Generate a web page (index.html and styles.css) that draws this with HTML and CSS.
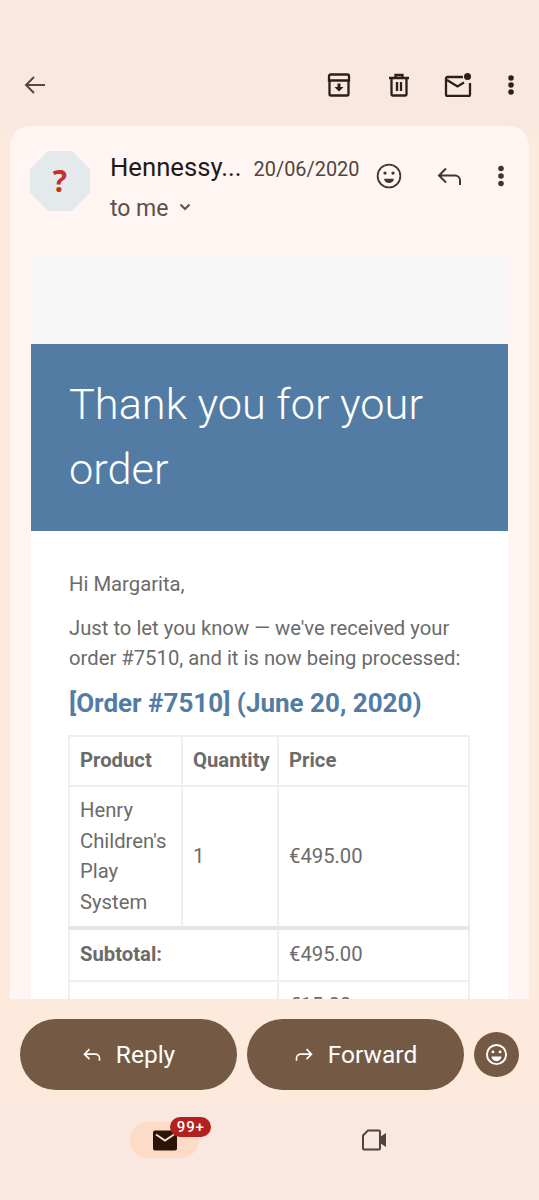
FILE: index.html
```html
<!DOCTYPE html>
<html lang="en">
<head>
    <meta charset="UTF-8">
    <title>Order #7510</title>
    <link rel="stylesheet" href="styles.css">
</head>
<body>
    <div class="top-bar">
        <svg class="ico back" viewBox="0 0 24 24"><path d="M22 12H3M11 4l-8 8 8 8"/></svg>
        <div class="top-actions">
            <svg class="ico" viewBox="0 0 24 24"><path d="M2.500 7.500V21a1.500 1.500 0 0 0 1.500 1.500h16a1.500 1.500 0 0 0 1.500-1.500V7.500M2 7.500V3a1.500 1.500 0 0 1 1.500-1.500h17A1.500 1.500 0 0 1 22 3v4.500z"/><path class="fill" d="M10.500 10.500h3V14H16.500L12 18.500 7.500 14h3z"/></svg>
            <svg class="ico trash" viewBox="0 0 24 24"><path d="M2 5h20M8.500 5V2h7v3M4.500 5v16a1.500 1.500 0 0 0 1.500 1.500h12a1.500 1.500 0 0 0 1.500-1.500V5M10 9v9M14 9v9"/></svg>
            <svg class="ico wide" viewBox="0 0 28 24"><path d="M19 4H3.500A1.500 1.500 0 0 0 2 5.500v16A1.500 1.500 0 0 0 3.500 23h21a1.500 1.500 0 0 0 1.500-1.500V10M3 7l10.500 6.500L20 9.500"/><circle class="fill" cx="23.500" cy="3.500" r="3.500"/></svg>
            <svg class="ico dots" viewBox="0 0 24 24"><circle class="fill" cx="12" cy="5" r="2.800"/><circle class="fill" cx="12" cy="12" r="2.800"/><circle class="fill" cx="12" cy="19" r="2.800"/></svg>
        </div>
    </div>

    <div class="mail-card">
        <div class="mail-head">
            <div class="avatar">?</div>
            <div class="sender">
                <div class="sender-line"><span class="sender-name">Hennessy...</span><span class="sender-date">20/06/2020</span></div>
                <div class="to-me">to me <svg class="chev" viewBox="0 0 12 8"><path d="M1.500 1.500 6 6l4.500-4.500"/></svg></div>
            </div>
            <div class="head-actions">
                <svg class="ico smile" viewBox="0 0 24 24"><circle cx="12" cy="12" r="10.500"/><circle class="fill" cx="8.300" cy="9.300" r="1.500"/><circle class="fill" cx="15.700" cy="9.300" r="1.500"/><path class="fill" d="M7.500 14.500h9a4.500 4 0 0 1-9 0z"/></svg>
                <svg class="ico" viewBox="0 0 26 26"><path d="M10 5.500 3 12.500l7 7M3.500 12.500H19a5 5 0 0 1 5 5V22"/></svg>
                <svg class="ico menu" viewBox="0 0 20 26"><circle class="fill" cx="10" cy="5.500" r="2.800"/><circle class="fill" cx="10" cy="13" r="2.800"/><circle class="fill" cx="10" cy="20.500" r="2.800"/></svg>
            </div>
        </div>

        <div class="mail-sheet">
            <div class="sheet-top"></div>
            <div class="banner">Thank you for your order</div>
            <div class="mail-body">
                <p class="greet">Hi Margarita,</p>
                <p class="intro">Just to let you know — we've received your order #7510, and it is now being processed:</p>
                <h2>[Order #7510] (June 20, 2020)</h2>
                <table class="order">
                    <tr class="row-head"><th class="c1">Product</th><th class="c2">Quantity</th><th>Price</th></tr>
                    <tr class="row-item"><td class="c1">Henry Children's Play System</td><td class="c2">1</td><td>€495.00</td></tr>
                    <tr class="row-sub"><th colspan="2">Subtotal:</th><td>€495.00</td></tr>
                    <tr class="row-cut"><th colspan="2"></th><td>€15.00</td></tr>
                </table>
            </div>
        </div>
    </div>

    <div class="bottom">
        <div class="reply-bar">
            <div class="pill">
                <svg class="ico-sm" viewBox="0 0 24 24"><path d="M9 5 3 11l6 6M3.500 11H16a5 5 0 0 1 5 5v3"/></svg>
                Reply
            </div>
            <div class="pill">
                <svg class="ico-sm" viewBox="0 0 24 24"><path d="M15 5l6 6-6 6M20.500 11H8a5 5 0 0 0-5 5v3"/></svg>
                Forward
            </div>
            <div class="round">
                <svg class="ico-smile" viewBox="0 0 24 24"><circle cx="12" cy="12" r="10"/><circle class="fill" cx="8.300" cy="9.300" r="1.500"/><circle class="fill" cx="15.700" cy="9.300" r="1.500"/><path class="fill" d="M6.800 14h10.400a5.200 5 0 0 1-10.400 0z"/></svg>
            </div>
        </div>
        <div class="nav-bar">
            <div class="nav-item">
                <div class="nav-active">
                    <svg class="nav-mail" viewBox="0 0 24 20"><rect class="mail-back" width="24" height="20" rx="2"/><path class="mail-flap" d="M3 4l9 6 9-6"/></svg>
                    <span class="badge">99+</span>
                </div>
            </div>
            <div class="nav-item">
                <svg class="nav-video" viewBox="0 0 26 22"><path d="M7 1.500h11a1 1 0 0 1 1 1v17a1 1 0 0 1-1 1H3a1 1 0 0 1-1-1V6.500z"/><path class="fill" d="M19 8l6-4v14l-6-4z"/></svg>
            </div>
        </div>
    </div>
</body>
</html>
```
FILE: styles.css
```css
* {
    box-sizing: border-box;
}

html, body {
    margin: 0;
    height: 1200px;
    overflow: hidden;
}

body {
    position: relative;
    font-family: Roboto, "Noto Sans", sans-serif;
    background: linear-gradient(#f9e8df 0, #f9e8df 122px, #feeadd 150px);
    color: #4f4540;
}

svg path, svg circle {
    fill: none;
    stroke: currentColor;
    stroke-width: 2;
}

svg .fill {
    fill: currentColor;
    stroke: none;
}

.top-bar {
    height: 126px;
    padding: 73px 16px 0 23px;
    display: flex;
    justify-content: space-between;
    align-items: flex-start;
}

.top-actions {
    display: flex;
    align-items: center;
    color: #2a1f1a;
}

.top-actions svg path {
    stroke-width: 2.3;
}

.top-actions svg .fill {
    stroke: none;
}

.top-actions .trash {
    margin-left: 36px;
}

.top-actions .wide {
    margin-left: 33px;
}

.top-actions .dots {
    margin-left: 27px;
}

.ico {
    width: 24px;
    height: 24px;
    display: block;
}

.ico.back {
    color: #55483f;
}

.ico.wide {
    width: 28px;
}

.mail-card {
    margin: 0 10px;
    height: 874px;
    background: #fff5f2;
    border-radius: 20px 20px 0 0;
    overflow: hidden;
}

.mail-head {
    height: 130px;
    padding: 25px 16px 0 20px;
    display: flex;
}

.avatar {
    width: 60px;
    height: 60px;
    background: #e4eaec;
    clip-path: polygon(30% 0, 70% 0, 100% 30%, 100% 70%, 70% 100%, 30% 100%, 0 70%, 0 30%);
    color: #c5302d;
    font: bold 30px/60px "Open Sans", sans-serif;
    text-align: center;
}

.sender {
    margin-left: 20px;
    width: 250px;
    flex: none;
}

.sender-line {
    display: flex;
    align-items: baseline;
    gap: 12px;
    height: 34px;
    padding-top: 1px;
}

.sender-name {
    font-size: 25.7px;
    color: #1f1a17;
}

.sender-date {
    font-size: 19.9px;
    color: #4f4540;
}

.to-me {
    margin-top: 10px;
    font-size: 23px;
    color: #5a504a;
}

.chev {
    width: 12px;
    height: 8px;
    margin: 0 0 5px 5px;
}

.head-actions {
    display: flex;
    gap: 34px;
    margin: 12px 0 0 16px;
    color: #3f3630;
}

.head-actions .ico {
    width: 26px;
    height: 26px;
    flex: none;
}

.head-actions .smile circle {
    stroke-width: 1.7;
}

.head-actions .menu {
    width: 20px;
    margin-left: -5px;
}

.mail-sheet {
    margin: 0 21px;
    background: #fff;
}

.sheet-top {
    height: 88px;
    background: #f7f7f7;
}

.banner {
    height: 187px;
    background: #537ca5;
    color: #fff;
    padding: 28px 38px 0;
    font-size: 43.3px;
    font-weight: 300;
    line-height: 65px;
}

.mail-body {
    padding: 38px 36px 0 38px;
    color: #6b6b6b;
    font-size: 20.25px;
}

.mail-body p {
    margin: 0;
    line-height: 30.5px;
}

.mail-body .greet {
    margin-bottom: 13px;
}

.mail-body h2 {
    margin: 13px 0 16px;
    color: #537ca5;
    font-size: 26px;
    font-weight: 700;
    line-height: 32px;
}

.order {
    width: 402px;
    margin-left: -1px;
    border-collapse: collapse;
    font-size: 20.25px;
    table-layout: fixed;
}

.order th, .order td {
    border: 2px solid #efefef;
    padding: 0 10px;
    text-align: left;
    line-height: 30.5px;
    color: #6b6b6b;
}

.order .c1 {
    width: 113px;
}

.order .c2 {
    width: 96px;
}

.row-head th {
    height: 50px;
}

.row-item td {
    height: 142px;
}

.order .row-sub th, .order .row-sub td {
    border-top: 4px solid #e6e6e6;
    height: 53px;
}

.row-cut td, .row-cut th {
    height: 50px;
}

.bottom {
    position: absolute;
    left: 0;
    right: 0;
    top: 999px;
    height: 201px;
    background: linear-gradient(#feeadd 0, #feeadd 102px, #f9e8df 112px);
}

.reply-bar {
    display: flex;
    align-items: center;
    gap: 10px;
    padding: 20px 20px 0;
    height: 91px;
}

.pill {
    width: 217px;
    height: 71px;
    border-radius: 36px;
    background: #745a44;
    color: #fff;
    font-size: 24.5px;
    display: flex;
    align-items: center;
    justify-content: center;
    gap: 14px;
}

.ico-sm {
    width: 20px;
    height: 20px;
}

.round {
    width: 45px;
    height: 45px;
    border-radius: 50%;
    background: #745a44;
    color: #fff;
    display: flex;
    align-items: center;
    justify-content: center;
}

.ico-smile {
    width: 23px;
    height: 23px;
}

.nav-bar {
    display: flex;
    padding: 32px 60px 0;
}

.nav-item {
    flex: 1;
    display: flex;
    justify-content: center;
    height: 36px;
    align-items: center;
}

.nav-active {
    position: relative;
    width: 69px;
    height: 36px;
    border-radius: 18px;
    background: #fddbc7;
    display: flex;
    align-items: center;
    justify-content: center;
}

.nav-mail {
    width: 24px;
    height: 21px;
}

.mail-back {
    fill: #2a1508;
}

.mail-flap {
    stroke: #fbdcc8;
}

.badge {
    position: absolute;
    left: 40px;
    top: -5px;
    height: 20px;
    width: 41px;
    border-radius: 10px;
    background: #b3201e;
    color: #fff;
    font-size: 15px;
    font-weight: 500;
    line-height: 20px;
    text-align: center;
    letter-spacing: 0.8px;
}

.nav-video {
    width: 26px;
    height: 22px;
    color: #4f4540;
}
```
